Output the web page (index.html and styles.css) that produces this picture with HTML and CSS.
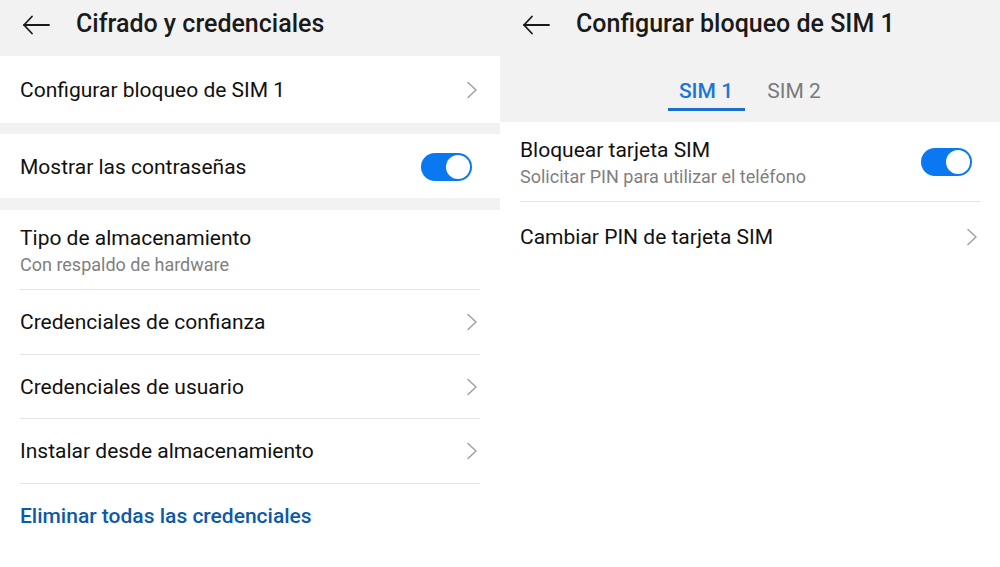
FILE: index.html
```html
<!DOCTYPE html>
<html>
  <head>
    <meta charset="UTF-8" />
    <title>Cifrado y credenciales</title>
    <link rel="stylesheet" href="styles.css">
  </head>
  <body>
    <div class="screens">
      <!-- left screen -->
      <div class="panel">
        <div class="header">
          <svg class="back" width="28" height="20" viewBox="0 0 28 20">
            <polyline points="10,1.5 2,10 10,18.5" />
            <line x1="2" y1="10" x2="27" y2="10" />
          </svg>
          <h1>Cifrado y credenciales</h1>
        </div>

        <div class="group group-first">
          <div class="row">
            <span class="label">Configurar bloqueo de SIM 1</span>
            <svg class="chevron" width="12" height="18" viewBox="0 0 12 18"><polyline points="2,1.5 10,9 2,16.5" /></svg>
          </div>
        </div>

        <div class="group group-toggle">
          <div class="row">
            <span class="label">Mostrar las contraseñas</span>
            <div class="switch on"><div class="knob"></div></div>
          </div>
        </div>

        <div class="group group-last">
          <div class="row row-two">
            <div class="texts">
              <span class="label">Tipo de almacenamiento</span>
              <span class="sub">Con respaldo de hardware</span>
            </div>
          </div>
          <div class="row line">
            <span class="label">Credenciales de confianza</span>
            <svg class="chevron" width="12" height="18" viewBox="0 0 12 18"><polyline points="2,1.5 10,9 2,16.5" /></svg>
          </div>
          <div class="row line">
            <span class="label">Credenciales de usuario</span>
            <svg class="chevron" width="12" height="18" viewBox="0 0 12 18"><polyline points="2,1.5 10,9 2,16.5" /></svg>
          </div>
          <div class="row line">
            <span class="label">Instalar desde almacenamiento</span>
            <svg class="chevron" width="12" height="18" viewBox="0 0 12 18"><polyline points="2,1.5 10,9 2,16.5" /></svg>
          </div>
          <div class="row line">
            <span class="label link">Eliminar todas las credenciales</span>
          </div>
        </div>
      </div>

      <!-- right screen -->
      <div class="panel">
        <div class="header">
          <svg class="back" width="28" height="20" viewBox="0 0 28 20">
            <polyline points="10,1.5 2,10 10,18.5" />
            <line x1="2" y1="10" x2="27" y2="10" />
          </svg>
          <h1>Configurar bloqueo de SIM 1</h1>
        </div>

        <div class="tabs">
          <div class="tab active">SIM 1</div>
          <div class="tab">SIM 2</div>
        </div>

        <div class="group group-last">
          <div class="row row-two">
            <div class="texts">
              <span class="label">Bloquear tarjeta SIM</span>
              <span class="sub">Solicitar PIN para utilizar el teléfono</span>
            </div>
            <div class="switch on"><div class="knob"></div></div>
          </div>
          <div class="row line tall">
            <span class="label">Cambiar PIN de tarjeta SIM</span>
            <svg class="chevron" width="12" height="18" viewBox="0 0 12 18"><polyline points="2,1.5 10,9 2,16.5" /></svg>
          </div>
        </div>
      </div>
    </div>
  </body>
</html>
```

FILE: styles.css
```css
/* Base */
body {
  font-family: Roboto, "Noto Sans", Arial, sans-serif;
  margin: 0;
  padding: 0;
  background-color: #ffffff;
  color: #111111;
}
.screens {
  display: flex;
  flex-direction: row;
  width: 1000px;
  height: 567px;
  overflow: hidden;
}
.panel {
  width: 500px;
  display: flex;
  flex-direction: column;
  background-color: #f2f2f2;
}

/* Header with back arrow */
.header {
  height: 56px;
  box-sizing: border-box;
  padding: 0 0 10px 22px;
  display: flex;
  align-items: center;
  flex-shrink: 0;
}
.back {
  margin-top: 3px;
  fill: none;
  stroke: #1a1a1a;
  stroke-width: 1.8;
  stroke-linecap: round;
  stroke-linejoin: round;
}
.header h1 {
  margin: 0 0 0 26px;
  font-size: 25px;
  font-weight: 500;
  color: #1a1a1a;
}

/* Groups and rows */
.group {
  background-color: #ffffff;
}
.group-first {
  margin-bottom: 11px;
}
.group-toggle {
  margin-bottom: 12px;
}
.group-last {
  flex: 1;
}
.row {
  display: flex;
  align-items: center;
  justify-content: space-between;
  margin: 0 20px;
  height: 64px;
  box-sizing: border-box;
  padding-top: 1px;
}
.group-first .row {
  height: 67px;
}
.row-two {
  height: 79px;
}
.line {
  border-top: 1px solid #e3e3e3;
  height: 64.5px;
}
.line.tall {
  height: 70px;
}
.label {
  font-size: 21px;
  color: #111111;
}
.texts {
  display: flex;
  flex-direction: column;
}
.texts .sub {
  font-size: 18px;
  color: #808080;
  margin-top: 4px;
}
.link {
  color: #0d5aa8;
  font-weight: 500;
}
.chevron {
  fill: none;
  stroke: #a3a3a3;
  stroke-width: 1.6;
  stroke-linecap: round;
  stroke-linejoin: round;
  margin-right: 2px;
}

/* Toggle switch */
.switch {
  position: relative;
  width: 51px;
  height: 28px;
  border-radius: 14px;
  background-color: #0a78f0;
  margin-right: 8px;
}
.switch .knob {
  position: absolute;
  top: 2px;
  right: 2px;
  width: 24px;
  height: 24px;
  border-radius: 50%;
  background-color: #ffffff;
}

/* Tabs */
.tabs {
  height: 66px;
  display: flex;
  justify-content: center;
  gap: 11px;
  flex-shrink: 0;
}
.tab {
  width: 77px;
  text-align: center;
  font-size: 21px;
  color: #7a7a7a;
  padding-top: 23px;
  box-sizing: border-box;
  height: 55px;
}
.tab.active {
  color: #1a77d9;
  font-weight: 500;
  border-bottom: 3px solid #1a6fd0;
}
```
